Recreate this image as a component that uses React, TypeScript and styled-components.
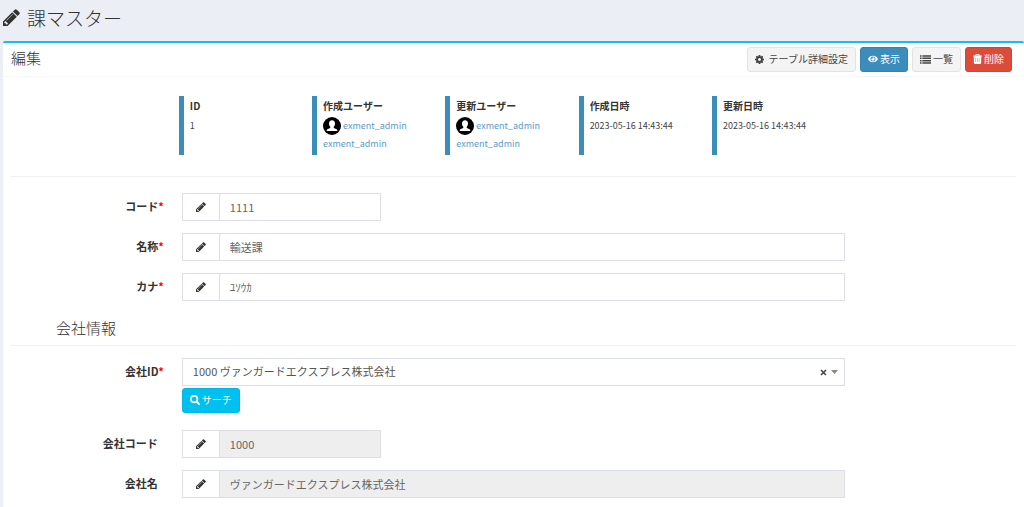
import React from "react";
import styled, { createGlobalStyle, css } from "styled-components";
import { FaEye } from "react-icons/fa";

const GlobalStyle = createGlobalStyle`
  *, *::before, *::after { box-sizing: border-box; }
  body {
    margin: 0;
    background: #ebeef4;
    color: #333;
    font-family: "Noto Sans CJK JP", sans-serif;
    font-size: 11px;
    line-height: 16px;
  }
  button, input, select { font: inherit; color: inherit; margin: 0; }
  a { color: #5a9bc8; text-decoration: none; }
`;

const Page = styled.div`
  display: flex;
  flex-direction: column;
  min-height: 100vh;
  padding-left: 3px;
`;

const PageTitle = styled.h1`
  display: flex;
  align-items: center;
  gap: 7px;
  height: 41px;
  margin: 0;
  padding-bottom: 6px;
  font-size: 19px;
  line-height: 24px;
  font-weight: 300;
`;

const Box = styled.main`
  flex: 1;
  background: #fff;
  border-top: 2px solid #12bfee;
  border-radius: 2px 2px 0 0;
`;

const BoxHeader = styled.header`
  display: flex;
  align-items: center;
  justify-content: space-between;
  height: 34px;
  padding: 0 12px 0 8px;
  border-bottom: 1px solid #f6f6f6;
`;

const BoxTitle = styled.h2`
  margin: 0;
  padding-bottom: 3px;
  font-size: 15px;
  line-height: 20px;
  font-weight: 300;
`;

const Tools = styled.div`
  display: flex;
  gap: 4px;
`;

const tones = {
  plain: css`background: #f4f4f4; border-color: #e3e3e3; color: #444;`,
  primary: css`background: #3c8dbc; border-color: #3883ae; color: #fff;`,
  danger: css`background: #dd4b39; border-color: #d44533; color: #fff;`,
  info: css`background: #00c0ef; border-color: #00b6e3; color: #fff;`,
};

const Button = styled.button<{ $tone: keyof typeof tones }>`
  display: inline-flex;
  align-items: center;
  gap: 2px;
  height: 25px;
  padding: 0 7px 1px;
  border: 1px solid;
  border-radius: 3px;
  font-size: 10px;
  white-space: nowrap;
  cursor: pointer;
  ${(p) => tones[p.$tone]}
`;

const SearchButton = styled(Button)`
  display: flex;
  margin: 2px 0 5px;
`;

const Content = styled.div`
  padding: 19px 8px 10px;
`;

const InfoList = styled.dl`
  display: grid;
  grid-template-columns: repeat(5, 1fr);
  margin: 0 17% 0 calc(17% - 3px);
`;

const InfoItem = styled.div`
  min-height: 59px;
  padding-left: 6px;
  border-left: 5px solid #3c8dbc;
`;

const InfoName = styled.dt`
  padding-top: 2px;
  font-size: 10px;
  font-weight: 700;
`;

const InfoValue = styled.dd`
  margin: 3px 0 0;
  font-size: 9px;
  line-height: 18px;
  color: #444;
  white-space: nowrap;
`;

const UserLine = styled.div`
  display: flex;
  align-items: center;
  gap: 2px;
`;

const Divider = styled.hr`
  height: 1px;
  margin: 21px 0 16px;
  border: 0;
  background: #f0f0f0;
`;

const Row = styled.div`
  display: grid;
  grid-template-columns: 17% 66%;
  margin-bottom: 12px;
`;

const Label = styled.label<{ $required?: boolean }>`
  padding: 5px ${(p) => (p.$required ? 18 : 24)}px 0 0;
  font-weight: 700;
  text-align: right;
`;

const Star = styled.span`
  color: #f00;
`;

const InputGroup = styled.div<{ $short?: boolean }>`
  display: flex;
  height: 28px;
  width: ${(p) => (p.$short ? "30%" : "100%")};
  min-width: 199px;
  border: 1px solid #dcdfe5;
`;

const Addon = styled.span`
  display: flex;
  align-items: center;
  justify-content: center;
  flex: 0 0 37px;
  border-right: 1px solid #dcdfe5;
`;

const TextInput = styled.input`
  flex: 1;
  min-width: 0;
  padding: 0 10px;
  border: 0;
  border-radius: 0;
  outline: none;
  background: #fff;
  color: #666;
  &:read-only { background: #eee; }
`;

const SelectWrap = styled.div`
  position: relative;
`;

const Select = styled.select`
  display: block;
  width: 100%;
  height: 28px;
  padding: 0 40px 2px 10px;
  border: 1px solid #dcdfe5;
  border-radius: 0;
  background: #fff;
  color: #555;
  appearance: none;
`;

const SelectMarks = styled.div`
  position: absolute;
  top: 0;
  right: 7px;
  height: 28px;
  display: flex;
  align-items: center;
  gap: 4px;
  pointer-events: none;
`;

const ClearButton = styled.button`
  display: flex;
  padding: 0;
  border: 0;
  background: none;
  pointer-events: auto;
`;

const SectionTitle = styled.h3`
  margin: 0 0 12px;
  padding: 5px 0 7px 45px;
  border-bottom: 1px solid #f0f0f0;
  font-size: 15px;
  line-height: 20px;
  font-weight: 300;
`;

const PENCIL =
  "M363 0l91 91l-235 235l-91 -91v-107h128v-128h107zM886 928q0 22 -22 22q-10 0 -17 -7l-542 -542q-7 -7 -7 -17q0 -22 22 -22q10 0 17 7l542 542q7 7 7 17zM832 1120l416 -416l-832 -832h-416v416zM1515 1024q0 -53 -37 -90l-166 -166l-416 416l166 165q36 38 90 38q53 0 91 -38l235 -234q37 -39 37 -91z";
const COG =
  "M1024 640q0 106 -75 181t-181 75t-181 -75t-75 -181t75 -181t181 -75t181 75t75 181zM1536 749v-222q0 -12 -8 -23t-20 -13l-185 -28q-19 -54 -39 -91q35 -50 107 -138q10 -12 10 -25t-9 -23q-27 -37 -99 -108t-94 -71q-12 0 -26 9l-138 108q-44 -23 -91 -38q-16 -136 -29 -186q-7 -28 -36 -28h-222q-14 0 -24.5 8.5t-11.5 21.5l-28 184q-49 16 -90 37l-141 -107q-10 -9 -25 -9q-14 0 -25 11q-126 114 -165 168q-7 10 -7 23q0 12 8 23q15 21 51 66.5t54 70.5q-27 50 -41 99l-183 27q-13 2 -21 12.5t-8 23.5v222q0 12 8 23t19 13l186 28q14 46 39 92q-40 57 -107 138q-10 12 -10 24q0 10 9 23q26 36 98.5 107.5t94.5 71.5q13 0 26 -10l138 -107q44 23 91 38q16 136 29 186q7 28 36 28h222q14 0 24.5 -8.5t11.5 -21.5l28 -184q49 -16 90 -37l142 107q9 9 24 9q13 0 25 -10q129 -119 165 -170q7 -8 7 -22q0 -12 -8 -23q-15 -21 -51 -66.5t-54 -70.5q26 -50 41 -98l183 -28q13 -2 21 -12.5t8 -23.5z";

const Glyph = ({ d, size }: { d: string; size: number }) => (
  <svg width={size} height={size} viewBox="0 -1408 1536 1536" fill="currentColor" aria-hidden>
    <path d={d} transform="scale(1 -1)" fillRule="evenodd" />
  </svg>
);

const ListIcon = () => (
  <svg width="11" height="9" viewBox="0 0 14 11" fill="currentColor" aria-hidden>
    {[0, 3, 6, 9].map((y) => (
      <path key={y} d={`M0 ${y}h2v2h-2zM3 ${y}h11v2h-11z`} />
    ))}
  </svg>
);

const TrashIcon = () => (
  <svg width="9" height="10" viewBox="0 0 11 12" fill="currentColor" aria-hidden>
    <path
      fillRule="evenodd"
      d="M3.5 0h4l.8 1.8H11v1.200H10V10.700q0 1.300-1.200 1.300H2.200Q1 12 1 10.700V3H0v-1.200h2.700zM4.200.9l-.4.900h3.400l-.4-.900zM3.200 4.800v4.800h.5v-4.800zM5.200 4.800v4.800h.5v-4.800zM7.200 4.800v4.800h.5v-4.800z"
    />
  </svg>
);

const SearchIcon = () => (
  <svg width="10" height="10" viewBox="0 0 12 12" fill="none" stroke="currentColor" aria-hidden>
    <circle cx="5" cy="5" r="3.900" strokeWidth="2" />
    <path d="M8 8l3 3" strokeWidth="2.400" strokeLinecap="round" />
  </svg>
);

const Avatar = () => (
  <svg width="18" height="18" viewBox="0 0 18 18" aria-hidden>
    <circle cx="9" cy="9" r="9" fill="#000" />
    <path
      d="M9 3.200c2 0 3 1.300 3 3.200 0 1.500-.5 2.700-1.300 3.300v1.100c.3.800 3.200 1 3.600 2.300v.9H3.700v-.9c.4-1.300 3.300-1.500 3.600-2.300V9.700C6.500 9.100 6 7.900 6 6.400c0-1.900 1-3.200 3-3.200z"
      fill="#fff"
    />
  </svg>
);

const UserValue = () => (
  <InfoValue>
    <UserLine>
      <Avatar />
      <a href="#user">exment_admin</a>
    </UserLine>
    <UserLine>
      <a href="#user">exment_admin</a>
    </UserLine>
  </InfoValue>
);

type FieldProps = {
  id: string;
  label: string;
  value: string;
  required?: boolean;
  short?: boolean;
  readOnly?: boolean;
};

const Field = ({ id, label, value, required, short, readOnly }: FieldProps) => (
  <Row>
    <Label htmlFor={id} $required={required}>
      {label}
      {required && <Star>*</Star>}
    </Label>
    <InputGroup $short={short}>
      <Addon>
        <Glyph d={PENCIL} size={10} />
      </Addon>
      <TextInput id={id} type="text" defaultValue={value} readOnly={readOnly} />
    </InputGroup>
  </Row>
);

export default function App() {
  return (
    <>
      <GlobalStyle />
      <Page>
        <PageTitle>
          <Glyph d={PENCIL} size={17} />
          課マスター
        </PageTitle>
        <Box>
          <BoxHeader>
            <BoxTitle>編集</BoxTitle>
            <Tools>
              <Button type="button" $tone="plain">
                <Glyph d={COG} size={9} />
                &nbsp;テーブル詳細設定
              </Button>
              <Button type="button" $tone="primary">
                <FaEye size={10} />
                表示
              </Button>
              <Button type="button" $tone="plain">
                <ListIcon />
                一覧
              </Button>
              <Button type="button" $tone="danger">
                <TrashIcon />
                削除
              </Button>
            </Tools>
          </BoxHeader>
          <Content>
            <InfoList>
              <InfoItem>
                <InfoName>ID</InfoName>
                <InfoValue>1</InfoValue>
              </InfoItem>
              <InfoItem>
                <InfoName>作成ユーザー</InfoName>
                <UserValue />
              </InfoItem>
              <InfoItem>
                <InfoName>更新ユーザー</InfoName>
                <UserValue />
              </InfoItem>
              <InfoItem>
                <InfoName>作成日時</InfoName>
                <InfoValue>2023-05-16 14:43:44</InfoValue>
              </InfoItem>
              <InfoItem>
                <InfoName>更新日時</InfoName>
                <InfoValue>2023-05-16 14:43:44</InfoValue>
              </InfoItem>
            </InfoList>
            <Divider />
            <form>
              <Field id="code" label="コード" value="1111" required short />
              <Field id="name" label="名称" value="輸送課" required />
              <Field id="kana" label="カナ" value="ﾕｿｳｶ" required />
              <SectionTitle>会社情報</SectionTitle>
              <Row>
                <Label htmlFor="company" $required>
                  会社ID<Star>*</Star>
                </Label>
                <div>
                  <SelectWrap>
                    <Select id="company" defaultValue="1000">
                      <option value="1000">1000 ヴァンガードエクスプレス株式会社</option>
                    </Select>
                    <SelectMarks>
                      <ClearButton type="button" aria-label="クリア">
                        <svg width="7" height="7" viewBox="0 0 7 7" stroke="#444" strokeWidth="1.600" aria-hidden>
                          <path d="M1 1l5 5M6 1l-5 5" />
                        </svg>
                      </ClearButton>
                      <svg width="7" height="4" viewBox="0 0 7 4" fill="#888" aria-hidden>
                        <path d="M0 0h7L3.500 4z" />
                      </svg>
                    </SelectMarks>
                  </SelectWrap>
                  <SearchButton type="button" $tone="info">
                    <SearchIcon />
                    サーチ
                  </SearchButton>
                </div>
              </Row>
              <Field id="company-code" label="会社コード" value="1000" short readOnly />
              <Field id="company-name" label="会社名" value="ヴァンガードエクスプレス株式会社" readOnly />
            </form>
          </Content>
        </Box>
      </Page>
    </>
  );
}
